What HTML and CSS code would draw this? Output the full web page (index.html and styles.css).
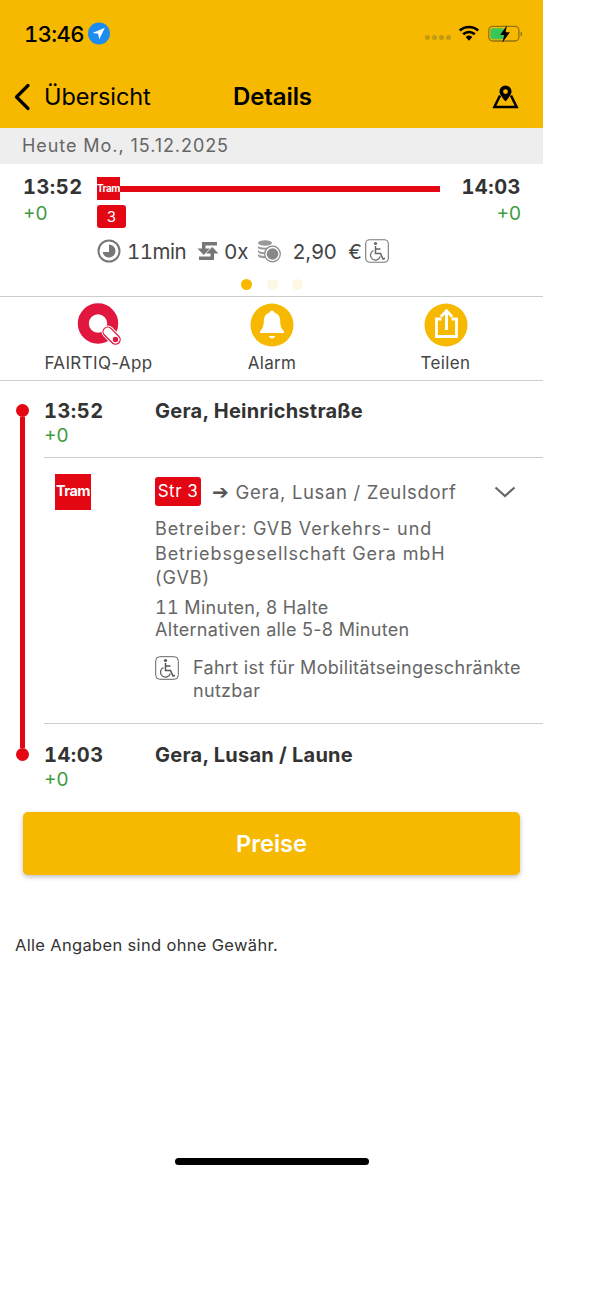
FILE: index.html
```html
<!DOCTYPE html>
<html lang="de">
<head>
<meta charset="utf-8">
<title>Details</title>
<link rel="stylesheet" href="styles.css">
</head>
<body>
<main class="app">
  <header class="head">
    <div class="status">
      <div class="clock">
        <span class="clock-time">13:46</span>
        <svg class="loc" viewBox="0 0 23 23"><circle cx="11.5" cy="11.5" r="11.5" fill="#1c8cf0"/><path d="M17.6 5.4 4.8 10.9l5.9.9 1 6z" fill="#fff"/></svg>
      </div>
      <div class="sys">
        <span class="dots"><i></i><i></i><i></i><i></i></span>
        <svg class="wifi" viewBox="0 0 22 16"><path d="M1.800 5.600a13.500 13.500 0 0 1 18.400 0" fill="none" stroke="#000" stroke-width="2.700"/><path d="M5.200 9.300a8.500 8.500 0 0 1 11.600 0" fill="none" stroke="#000" stroke-width="2.700"/><path d="M11 15.800 7.700 12a5 5 0 0 1 6.600 0z" fill="#000"/></svg>
        <svg class="batt" viewBox="0 0 36 18"><rect x=".8" y="1.200" width="31" height="15" rx="4" fill="none" stroke="#8f7410" stroke-width="1.300"/><rect x="2.500" y="3" width="14" height="11.500" rx="2.500" fill="#37c759"/><path d="M33.500 6.500c1.200.4 1.600 1.300 1.600 2.500s-.4 2.100-1.600 2.500z" fill="#8f7410"/><path d="M19.500 0 12.500 10h4.200l-2 8 7.800-10.800h-4.400z" fill="#000"/></svg>
      </div>
    </div>
    <nav class="nav">
      <div class="back">
        <svg class="chev" viewBox="0 0 18 28"><path d="M15 2.500 3.500 14 15 25.500" fill="none" stroke="#000" stroke-width="3.200" stroke-linecap="round" stroke-linejoin="round"/></svg>
        <span>Übersicht</span>
      </div>
      <h1 class="title">Details</h1>
      <svg class="map" viewBox="0 0 28 24"><path fill-rule="evenodd" d="M14 0a6.300 6.300 0 0 1 6.300 6.300C20.300 10 14 16.500 14 16.500S7.700 10 7.700 6.300A6.300 6.300 0 0 1 14 0zm0 3.900a2.500 2.500 0 1 0 0 5 2.500 2.500 0 0 0 0-5z" fill="#000"/><path d="M8.300 10.500 2.500 22.300h23l-5.800-11.800" fill="none" stroke="#000" stroke-width="2.600"/></svg>
    </nav>
  </header>

  <div class="date">Heute Mo., 15.12.2025</div>

  <section class="summary">
    <div class="sum-top">
      <div class="tcol">
        <div class="time">13:52</div>
        <div class="delay delay-s">+0</div>
      </div>
      <div class="trip">
        <div class="bar-row">
          <span class="tram-s">Tram</span>
          <span class="bar"></span>
        </div>
        <span class="line-badge">3</span>
      </div>
      <div class="tcol right">
        <div class="time">14:03</div>
        <div class="delay delay-s">+0</div>
      </div>
    </div>
    <div class="facts">
      <svg class="fi" viewBox="0 0 24 24"><circle cx="12" cy="12" r="10.500" fill="none" stroke="#777" stroke-width="2"/><path d="M12 5.500a6.500 6.500 0 1 1-6.400 7.500H12z" fill="#777"/></svg>
      <span class="f1">11min</span>
      <svg class="fi fi-sw" viewBox="0 0 24 24"><path d="M21 3H6v6.500H1.500L7.800 16l6.200-6.500H9.500V6.500H21z" fill="#777"/><path d="M3 21h15v-6.500h4.500L16.200 8 10 14.500h4.500v3H3z" fill="#777"/></svg>
      <span class="f2">0x</span>
      <svg class="fi fi-co" viewBox="0 0 24 24"><ellipse cx="8" cy="4" rx="7" ry="2.800" fill="#999"/><path d="M1 7c1 2 12 2.500 14 0v2c-2 2.500-13 2-14 0zM1 11c1 2 6 2.500 8 2v2c-3 .5-7 0-8-2zM1 15c1 1.500 5 2 8 2v2c-3 .5-7 0-8-2z" fill="#999"/><circle cx="15.500" cy="15" r="7.800" fill="#fff" stroke="#888" stroke-width="1.200"/><circle cx="15.500" cy="15" r="5.800" fill="#888"/></svg>
      <span class="f3">2,90 &nbsp;€</span>
      <svg class="wc" viewBox="0 0 24 24"><rect x=".7" y=".7" width="22.600" height="22.600" rx="4" fill="none" stroke="#777" stroke-width="1.100"/><circle cx="10.500" cy="4.500" r="1.600" fill="#666"/><path d="M10.500 7v7.500h5l2.500 5.500 2-.8M10.500 10h5" fill="none" stroke="#666" stroke-width="1.500"/><path d="M8.500 11.500a5 5 0 1 0 6.800 6" fill="none" stroke="#666" stroke-width="1.200"/></svg>
    </div>
    <div class="pager"><i class="on"></i><i></i><i></i></div>
  </section>

  <section class="actions">
    <div class="act">
      <svg class="act-i" viewBox="0 0 44 44"><circle cx="21" cy="20.500" r="14.700" fill="none" stroke="#e1173f" stroke-width="11"/><path d="M30.700 28.700 38.500 36.500" stroke="#fff" stroke-width="12.500" stroke-linecap="round"/><path d="M30.700 28.700 38.500 36.500" stroke="#e1173f" stroke-width="10.500" stroke-linecap="round"/><path d="M30.700 28.700 38.500 36.500" stroke="#fff" stroke-width="8" stroke-linecap="round"/><circle cx="38.500" cy="36.500" r="2.700" fill="#e1173f"/></svg>
      <span>FAIRTIQ-App</span>
    </div>
    <div class="act">
      <svg class="act-i" viewBox="0 0 44 44"><circle cx="22" cy="22" r="21.500" fill="#f6b900"/><path d="M22 7.500c1.300 0 2.200.9 2.200 2 4 1 6 4.500 6 8.500 0 5.500 1.600 8 3.800 10.300v1.700H10v-1.700c2.200-2.300 3.800-4.800 3.800-10.300 0-4 2-7.500 6-8.500 0-1.100.9-2 2.200-2z" fill="#fff"/><path d="M18.800 33h6.400a3.300 3.300 0 0 1-6.400 0z" fill="#fff"/></svg>
      <span>Alarm</span>
    </div>
    <div class="act">
      <svg class="act-i" viewBox="0 0 44 44"><circle cx="22" cy="22" r="21.500" fill="#f6b900"/><path d="M17.500 16H12.500v17.500h20V16h-5" fill="none" stroke="#fff" stroke-width="2.800"/><path d="M22.500 27V9" stroke="#fff" stroke-width="3"/><path d="m16.800 13.800 5.700-6 5.700 6" fill="none" stroke="#fff" stroke-width="2.800"/></svg>
      <span>Teilen</span>
    </div>
  </section>

  <section class="journey">
    <div class="rail"><i class="node"></i><i class="wire"></i><i class="node"></i></div>
    <div class="stops">
      <div class="stop stop-a">
        <div class="stop-t">
          <div class="time">13:52</div>
          <div class="delay">+0</div>
        </div>
        <div class="stop-n">Gera, Heinrichstraße</div>
      </div>
      <div class="leg">
        <div class="leg-logo"><span class="tram-l">Tram</span></div>
        <div class="leg-body">
          <div class="leg-head">
            <span class="str">Str 3</span>
            <span class="dir"><span class="arrow">➔</span> Gera, Lusan / Zeulsdorf</span>
            <svg class="down" viewBox="0 0 22 12"><path d="M1.500 1.500 11 10l9.500-8.500" fill="none" stroke="#666" stroke-width="2.200"/></svg>
          </div>
          <p class="op">Betreiber: GVB Verkehrs- und<br>Betriebsgesellschaft Gera mbH<br>(GVB)</p>
          <p class="dur"><span class="tn">11</span> Minuten, 8 Halte<br>Alternativen alle 5-8 Minuten</p>
          <div class="access">
            <svg class="wc wc-l" viewBox="0 0 24 24"><rect x=".7" y=".7" width="22.600" height="22.600" rx="4" fill="none" stroke="#666" stroke-width="1"/><circle cx="10.500" cy="4.500" r="1.600" fill="#555"/><path d="M10.500 7v7.500h5l2.500 5.500 2-.8M10.500 10h5" fill="none" stroke="#555" stroke-width="1.500"/><path d="M8.500 11.500a5 5 0 1 0 6.800 6" fill="none" stroke="#555" stroke-width="1.200"/></svg>
            <span class="access-t">Fahrt ist für Mobilitätseingeschränkte<br>nutzbar</span>
          </div>
        </div>
      </div>
      <div class="stop stop-b">
        <div class="stop-t">
          <div class="time">14:03</div>
          <div class="delay">+0</div>
        </div>
        <div class="stop-n">Gera, Lusan / Laune</div>
      </div>
    </div>
  </section>

  <button class="price" type="button">Preise</button>
  <p class="note">Alle Angaben sind ohne Gewähr.</p>
  <div class="home"></div>
</main>
</body>
</html>
```

FILE: styles.css
```css
* { box-sizing: border-box; }
html, body { margin: 0; padding: 0; background: #fff; }
body { font-family: Inter, "Liberation Sans", sans-serif; color: #333; height: 1299px; overflow: hidden; }
.app { width: 543px; }
.head { background: #f6b900; height: 128px; color: #000; }
.status { height: 68px; display: flex; justify-content: space-between; padding: 22px 20px 0 24px; }
.clock { display: flex; align-items: flex-start; gap: 4px; }
.clock-time { font-size: 22px; line-height: 24px; font-weight: 500; letter-spacing: -.6px; font-variant-numeric: tabular-nums; }
.loc { width: 22px; height: 23px; }
.sys { display: flex; align-items: flex-start; }
.dots { display: flex; gap: 2px; margin-top: 13px; margin-right: 7px; }
.dots i { width: 5px; height: 5px; border-radius: 50%; background: #c09a10; }
.wifi { width: 22px; height: 16px; margin-top: 3px; margin-right: 8px; }
.batt { width: 35px; height: 18px; margin-top: 3px; }
.nav { display: flex; align-items: center; height: 57px; padding: 0 24px 0 13px; }
.back { display: flex; align-items: center; gap: 13px; font-size: 23.500px; width: 220px; letter-spacing: -.1px; }
.chev { width: 18px; height: 28px; }
.title { flex: 1; margin: 0; font-size: 24px; font-weight: 600; letter-spacing: -.1px; }
.map { width: 27px; height: 24px; }

.date { background: #eee; height: 36px; line-height: 36px; padding-left: 22px; font-size: 18px; color: #666; letter-spacing: .93px; }

.summary { height: 133px; padding: 10px 22px 0 23px; border-bottom: 1px solid #ccc; }
.sum-top { display: flex; height: 62px; }
.tcol { width: 60px; }
.tcol.right { text-align: right; }
.time { font-size: 20px; line-height: 26px; font-weight: 700; color: #333; letter-spacing: .5px; font-variant-numeric: tabular-nums; }
.delay { font-size: 19px; line-height: 24px; color: #3f9b3f; }
.delay-s { margin-top: 2px; }
.trip { flex: 1; padding: 3px 21px 0 14px; }
.bar-row { display: flex; align-items: center; }
.tram-s { width: 23px; height: 23px; background: #e30613; color: #fff; font-size: 10px; line-height: 23px; font-weight: 700; text-align: center; letter-spacing: -.5px; flex: none; }
.bar { flex: 1; height: 6px; background: #e30613; }
.line-badge { display: block; width: 29px; height: 23px; margin-top: 5px; background: #e30613; color: #fff; border-radius: 3px; text-align: center; font-size: 15px; line-height: 23px; }
.facts { display: flex; align-items: center; height: 30px; padding-left: 74px; font-size: 20.500px; color: #444; }
.fi { width: 24px; height: 24px; flex: none; }
.f1 { margin-left: 6px; letter-spacing: -.5px; font-variant-numeric: tabular-nums; }
.fi-sw { margin-left: 10px; }
.f2 { margin-left: 4px; letter-spacing: .3px; }
.fi-co { margin-left: 8px; }
.f3 { margin-left: 12px; }
.wc { width: 24px; height: 24px; flex: none; margin-left: 3px; }
.pager { display: flex; gap: 14.500px; padding-left: 218px; margin-top: 13px; }
.pager i { width: 11px; height: 11px; border-radius: 50%; background: #fdf8e4; }
.pager i.on { background: #f6b900; }

.actions { display: grid; grid-template-columns: 197px 150px 197px; height: 84px; border-bottom: 1px solid #ccc; text-align: center; }
.act { display: flex; flex-direction: column; align-items: center; padding-top: 6px; font-size: 17px; color: #444; letter-spacing: .35px; }
.act-i { width: 44px; height: 44px; margin-bottom: 6px; }

.journey { display: flex; }
.rail { flex: none; width: 44px; display: flex; flex-direction: column; align-items: center; padding: 23px 0 0 1px; }
.node { width: 13px; height: 13px; border-radius: 50%; background: #e30613; flex: none; }
.wire { width: 5px; height: 331px; background: #e30613; flex: none; }
.stops { flex: 1; min-width: 0; }
.stop { display: flex; }
.stop-a { height: 77px; padding-top: 17px; border-bottom: 1px solid #ccc; }
.stop-b { height: 88px; padding-top: 18px; }
.stop-t { width: 111px; }
.stop-n { font-size: 20px; line-height: 26px; font-weight: 700; color: #333; letter-spacing: .25px; }
.leg { display: flex; height: 266px; border-bottom: 1px solid #ccc; padding-top: 16px; }
.leg-logo { width: 111px; padding-left: 11px; }
.tram-l { display: block; width: 36px; height: 36px; background: #e30613; color: #fff; font-size: 14.500px; line-height: 34px; font-weight: 700; text-align: center; letter-spacing: -.5px; }
.leg-body { flex: 1; min-width: 0; padding-right: 15px; color: #666; font-size: 18px; }
.leg-head { display: flex; align-items: center; height: 29px; margin-top: 3px; padding-right: 5px; }
.str { background: #e30613; color: #fff; border-radius: 3px; width: 46px; height: 29px; line-height: 29px; text-align: center; font-size: 17px; flex: none; letter-spacing: .5px; }
.dir { margin-left: 11px; flex: 1; font-size: 18.500px; letter-spacing: .65px; white-space: nowrap; }
.arrow { color: #555; font-size: 20px; }
.down { width: 22px; height: 12px; margin-right: 7px; flex: none; }
.op { margin: 11px 0 0; line-height: 24.500px; letter-spacing: .9px; }
.dur { margin: 6.500px 0 0; line-height: 22px; letter-spacing: .3px; }
.tn { font-variant-numeric: tabular-nums; }
.access { display: flex; margin-top: 15px; line-height: 23px; letter-spacing: .3px; }
.access-t { white-space: nowrap; }
.wc-l { margin: 0 14px 0 0; }

.price { display: block; width: 497px; height: 63px; margin: 0 0 0 23px; border: 0; border-radius: 5px; background: #f6b900; color: #fff; font: 600 23.500px Inter, "Liberation Sans", sans-serif; box-shadow: 0 2px 5px rgba(0,0,0,.25); }
.note { margin: 60px 0 0 15px; font-size: 16.500px; line-height: 20px; color: #333; letter-spacing: .33px; }
.home { width: 194px; height: 7px; margin: 203px 0 0 175px; background: #000; border-radius: 4px; }
```
